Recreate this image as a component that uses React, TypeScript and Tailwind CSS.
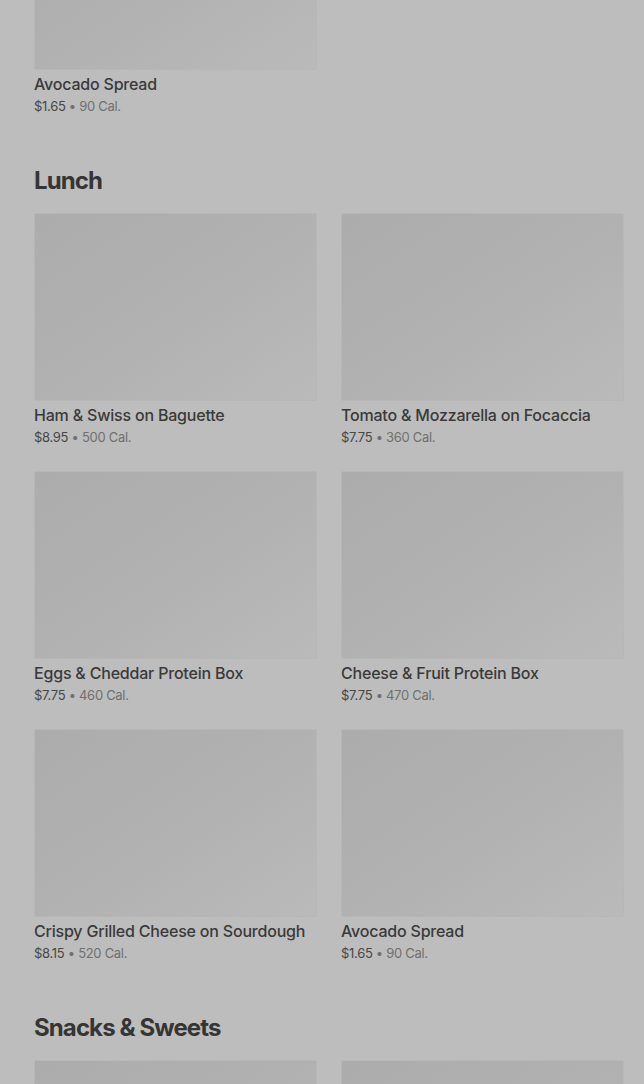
import React from "react";

type Item = { name: string; price: string; cal: string };

const lunch: Item[] = [
  { name: "Ham & Swiss on Baguette", price: "$8.95", cal: "500 Cal." },
  { name: "Tomato & Mozzarella on Focaccia", price: "$7.75", cal: "360 Cal." },
  { name: "Eggs & Cheddar Protein Box", price: "$7.75", cal: "460 Cal." },
  { name: "Cheese & Fruit Protein Box", price: "$7.75", cal: "470 Cal." },
  { name: "Crispy Grilled Cheese on Sourdough", price: "$8.15", cal: "520 Cal." },
  { name: "Avocado Spread", price: "$1.65", cal: "90 Cal." },
];

const snacks: Item[] = [
  { name: "Chocolate Chip Cookie", price: "$2.45", cal: "370 Cal." },
  { name: "Kettle Chips", price: "$2.25", cal: "150 Cal." },
];

function MenuCard({ item }: { item: Item }) {
  return (
    <div className="flex flex-col">
      <div className="h-[188px] w-full rounded-[2px] border border-[#b7b7b7] bg-gradient-to-br from-[#acacac] via-[#b1b1b1] to-[#bababa]" />
      <div className="mt-0.5 truncate text-[16px] font-medium leading-6 tracking-[-0.2px] text-[#3a3a3a]">
        {item.name}
      </div>
      <div className="text-[13px] leading-5 tracking-[-0.3px]">
        <span className="text-[#474747]">{item.price}</span>
        <span className="text-[#707070]"> • {item.cal}</span>
      </div>
    </div>
  );
}

function Section({ title, items }: { title: string; items: Item[] }) {
  return (
    <section className="mt-[49px]">
      <h2 className="text-[24px] font-bold leading-8 tracking-[-0.9px] text-[#353535]">
        {title}
      </h2>
      <div className="mt-4 grid grid-cols-2 gap-x-6 gap-y-6">
        {items.map((it) => (
          <MenuCard key={it.name + it.price} item={it} />
        ))}
      </div>
    </section>
  );
}

export default function App() {
  return (
    <div
      className="h-[1084px] overflow-hidden bg-[#bdbdbd]"
      style={{ fontFamily: "Inter, 'Noto Sans', sans-serif" }}
    >
      <main className="-mt-[118px] pl-[34px] pr-[20px]">
        <div className="grid grid-cols-2 gap-x-6">
          <MenuCard item={{ name: "Avocado Spread", price: "$1.65", cal: "90 Cal." }} />
        </div>
        <Section title="Lunch" items={lunch} />
        <Section title="Snacks & Sweets" items={snacks} />
      </main>
    </div>
  );
}
